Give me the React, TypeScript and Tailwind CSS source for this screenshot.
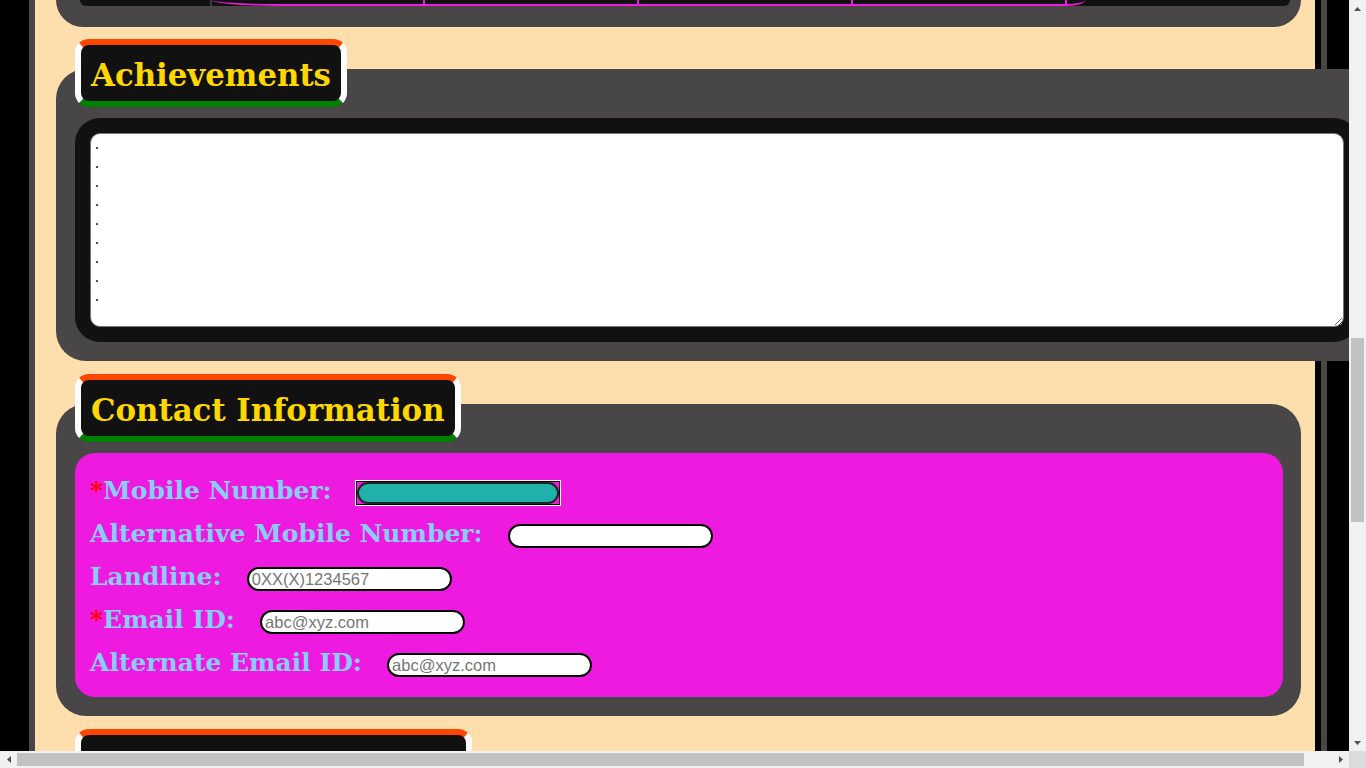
import React from "react";

function Tab({ title, width }: { title?: string; width?: string }) {
  return (
    <div
      className={`relative z-10 ml-[19px] self-start rounded-[14px] border-[6px] border-t-[#ff4500] border-x-white border-b-[#008000] bg-[#111111] ${width ?? ""}`}
    >
      <div className="flex h-[56px] items-center px-[10px] pt-[4px] font-['DejaVu_Serif',serif] text-[30.8px] font-bold leading-none text-[#ffd700]">
        {title}
      </div>
    </div>
  );
}

function Row({
  label,
  required,
  placeholder,
  focused,
}: {
  label: string;
  required?: boolean;
  placeholder?: string;
  focused?: boolean;
}) {
  return (
    <div className="flex h-[43px] items-center">
      <span className="font-['DejaVu_Serif',serif] text-[25px] font-bold leading-none text-[#87cefa]">
        {required && <span className="text-[#ff0000]">*</span>}
        {label}
      </span>
      {focused ? (
        <span className="ml-[23px] mt-[4px] flex border border-white">
          <span className="flex border border-black">
            <input
              className="h-[22px] w-[202px] rounded-[11px] border-2 border-[#222] bg-[#20b2aa] px-[3px] font-['Liberation_Sans',sans-serif] text-[16px] outline-none"
              defaultValue=""
            />
          </span>
        </span>
      ) : (
        <input
          className="ml-[25px] mt-[5px] h-[24px] w-[205px] rounded-[12px] border-2 border-black bg-white px-[3px] font-['Liberation_Sans',sans-serif] text-[16.5px] text-black outline-none placeholder:text-[#757575]"
          placeholder={placeholder}
        />
      )}
    </div>
  );
}

function Arrow({ dir }: { dir: "up" | "down" | "left" | "right" }) {
  const pts =
    dir === "up"
      ? "0,4 3.5,0 7,4"
      : dir === "down"
      ? "0,0 7,0 3.5,4"
      : dir === "left"
      ? "4,0 4,7 0,3.5"
      : "0,0 0,7 4,3.5";
  const w = dir === "up" || dir === "down" ? 7 : 4;
  const h = dir === "up" || dir === "down" ? 4 : 7;
  return (
    <svg width={w} height={h} viewBox={`0 0 ${w} ${h}`}>
      <polygon points={pts} fill="#505050" />
    </svg>
  );
}

export default function App() {
  const dots = Array(9).fill(".").join("\n");
  return (
    <div className="flex h-[768px] w-[1366px] flex-col overflow-hidden bg-black">
      <div className="flex h-[751px]">
        {/* page viewport */}
        <div className="h-[751px] w-[1349px] overflow-hidden bg-black pl-[29px]">
          <div className="h-full w-[1292px] border-l-[6px] border-r-[6px] border-l-[#484646] border-r-black bg-[#ffdead] pl-[21px] shadow-[6px_0_0_0_#484646]">
            {/* bottom of previous section */}
            <div className="h-[27px] w-[1245px] rounded-b-[28px] bg-[#484646] pl-[24px] pr-[11px]">
              <div className="flex h-[6px] overflow-hidden rounded-b-[12px] bg-[#111111]">
                <div className="w-[130px]" />
                <div className="w-[2px] bg-[#3a3a3a]" />
                <div className="flex w-[873px] rounded-bl-[90px_8px] rounded-br-[24px_8px] border-b-2 border-[#ee1ae0]">
                  <div className="w-[213px] border-r-2 border-[#ee1ae0]" />
                  <div className="w-[214px] border-r-2 border-[#ee1ae0]" />
                  <div className="w-[214px] border-r-2 border-[#ee1ae0]" />
                  <div className="w-[214px] border-r-2 border-[#ee1ae0]" />
                </div>
              </div>
            </div>

            {/* Achievements */}
            <div className="mt-[12px] flex flex-col">
              <Tab title="Achievements" />
              <div className="-mt-[38px] w-[1322px] rounded-[30px] bg-[#484646] px-[19px] pb-[19px] pt-[49px]">
                <div className="rounded-[25px] bg-[#111111] p-[15px]">
                  <textarea
                    className="block h-[194px] w-full rounded-[10px] border border-[#767676] bg-white px-[2px] pt-[2px] font-['Liberation_Mono',monospace] text-[13px] leading-[19px] text-black outline-none"
                    defaultValue={dots}
                  />
                </div>
              </div>
            </div>

            {/* Contact Information */}
            <div className="mt-[13px] flex flex-col">
              <Tab title="Contact Information" />
              <div className="-mt-[38px] w-[1245px] rounded-[30px] bg-[#484646] pb-[19px] pl-[19px] pr-[18px] pt-[49px]">
                <div className="rounded-[20px] bg-[#ee1ae0] pb-[13px] pl-[15px] pt-[16px]">
                  <Row label="Mobile Number:" required focused />
                  <Row label="Alternative Mobile Number:" />
                  <Row label="Landline:" placeholder="0XX(X)1234567" />
                  <Row label="Email ID:" required placeholder="abc@xyz.com" />
                  <Row label="Alternate Email ID:" placeholder="abc@xyz.com" />
                </div>
              </div>
            </div>

            {/* next section tab (cut off) */}
            <div className="mt-[13px] flex flex-col">
              <Tab width="w-[397px]" />
            </div>
          </div>
        </div>
        {/* vertical scrollbar */}
        <div className="flex w-[17px] flex-col items-center bg-[#f1f1f1]">
          <div className="flex h-[17px] w-full items-center justify-center">
            <Arrow dir="up" />
          </div>
          <div className="flex-1">
            <div className="mt-[321px] h-[184px] w-[13px] bg-[#c1c1c1]" />
          </div>
          <div className="flex h-[17px] w-full items-center justify-center">
            <Arrow dir="down" />
          </div>
        </div>
      </div>
      <div className="flex h-[17px]">
        <div className="flex w-[1349px] items-center bg-[#f1f1f1]">
          <div className="flex h-[17px] w-[17px] items-center justify-center">
            <Arrow dir="left" />
          </div>
          <div className="h-[13px] w-[1287px] bg-[#c1c1c1]" />
          <div className="flex-1" />
          <div className="flex h-[17px] w-[17px] items-center justify-center">
            <Arrow dir="right" />
          </div>
        </div>
        <div className="w-[17px] bg-[#dcdcdc]" />
      </div>
    </div>
  );
}
